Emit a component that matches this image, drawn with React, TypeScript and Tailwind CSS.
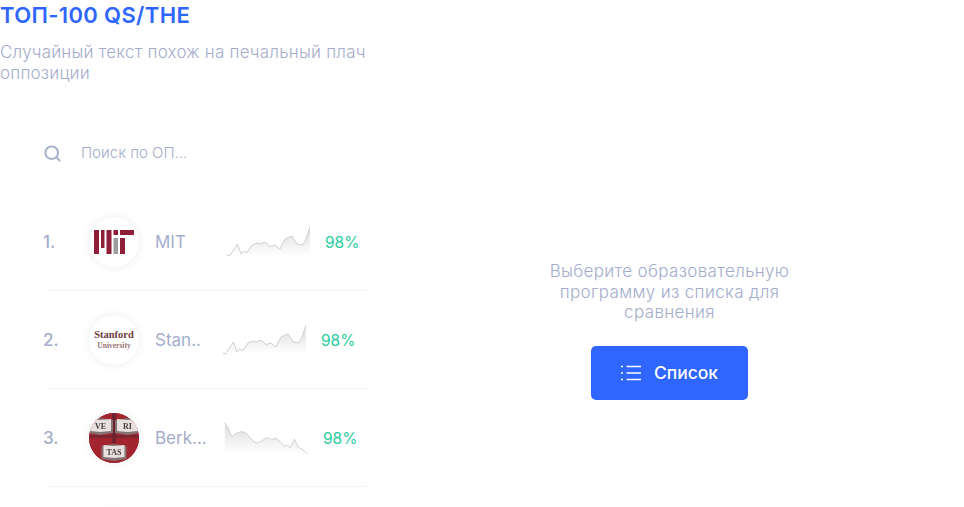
import React from 'react';
import { Search } from 'lucide-react';

const FONT = "font-['Inter','Noto_Sans',sans-serif]";

const UP_LINE = 'M1 30 L3.5 31 L11.5 19 L15 29 L17.500 26 L21 27.500 L26 20 L31 18 L34 19 L39 17 L44 21.500 L49 20 L54 24 L59 14 L66 11 L71 19 L77 20 L80 14 L84 2';
const UP_AREA = `${UP_LINE} L84 31 L1 31 Z`;

const DOWN_LINE = 'M1 2 L5 8 L10 19 L16 15 L21 13 L27 14 L33 20 L39 26 L43 27 L48 24 L55 20 L60 23 L66 21 L71 25 L76 31 L80 29 L84 33 L89 22 L94 32 L98 34 L106 40';
const DOWN_AREA = `${DOWN_LINE} L106 40 L1 40 Z`;

const Sparkline = ({ id, flip }: { id: string; flip?: boolean }) => (
  <svg width="84" height="33" viewBox="0 0 84 33" className="shrink-0">
    <defs>
      <linearGradient id={id} x1="0" y1="0" x2="0" y2="1">
        <stop offset="0" stopColor="#dcdcdc" />
        <stop offset="1" stopColor="#ffffff" />
      </linearGradient>
    </defs>
    {flip ? (
      <g transform="scale(0.79 0.82)">
        <path d={DOWN_AREA} fill={`url(#${id})`} />
        <path d={DOWN_LINE} fill="none" stroke="#cfcfcf" strokeWidth="1.2" />
      </g>
    ) : (
      <g>
        <path d={UP_AREA} fill={`url(#${id})`} />
        <path d={UP_LINE} fill="none" stroke="#cfcfcf" strokeWidth="1" />
      </g>
    )}
  </svg>
);

const MitLogo = () => (
  <svg width="40" height="40" viewBox="0 0 40 40" className="blur-[0.4px]">
    <g fill="#8f1f38">
      <rect x="0" y="8" width="5" height="24" />
      <rect x="7" y="8" width="3.500" height="18" />
      <rect x="12.500" y="8" width="5" height="24" />
      <rect x="19.500" y="8" width="4.500" height="5" />
      <rect x="26" y="8" width="14" height="5" />
      <rect x="26" y="16" width="5" height="16" />
    </g>
    <rect x="19.500" y="16" width="4.500" height="16" fill="#9d9d9d" />
  </svg>
);

const StanfordLogo = () => (
  <div className="flex flex-col items-center font-['Liberation_Serif',serif] leading-none text-[#6e3a40]">
    <span className="text-[10.500px] font-bold">Stanford</span>
    <span className="mt-[1px] text-[7.500px] font-bold text-[#9a7478]">University</span>
  </div>
);

const Book = ({ x, y, label }: { x: number; y: number; label: string }) => (
  <g transform={`translate(${x} ${y})`}>
    <path d="M-2 2 L10.500 0 L23 2 L23 15 L10.500 17 L-2 15 Z" fill="#857272" />
    <path d="M0 1 L10.500 2 L21 1 L21 13 L10.500 14 L0 13 Z" fill="#e6e0de" />
    <text x="10.500" y="11" textAnchor="middle" fontSize="8" fontFamily="Liberation Serif, serif" fontWeight="700" fill="#4a3a3c">{label}</text>
  </g>
);

const HarvardLogo = () => (
  <svg width="50" height="50" viewBox="0 0 50 50" className="blur-[0.4px]">
    <rect width="50" height="50" fill="#a2242f" />
    <rect x="0" y="22" width="50" height="3" fill="#7e2532" />
    <rect x="23" y="0" width="4" height="30" fill="#6e2230" />
    <Book x={1} y={5} label="VE" />
    <Book x={28} y={5} label="RI" />
    <Book x={14.500} y={31} label="TAS" />
  </svg>
);

const rows = [
  { n: '1.', name: 'MIT', logo: <MitLogo />, bg: 'bg-white', nameW: 'w-[71px]', flip: false },
  { n: '2.', name: 'Stan..', logo: <StanfordLogo />, bg: 'bg-white', nameW: 'w-[67px]', flip: false },
  { n: '3.', name: 'Berk...', logo: <HarvardLogo />, bg: 'bg-[#a2242f]', nameW: 'w-[69px]', flip: true },
];

const App: React.FC = () => {
  return (
    <div className={`${FONT} h-[507px] w-[964px] overflow-hidden bg-white`}>
      <div className="flex">
        <div className="w-[367px] shrink-0">
          <h1 className="text-[22px] font-semibold leading-[30px] tracking-[0.35px] text-[#2f66ff]">ТОП-100 QS/THE</h1>
          <p className="mt-[12px] text-[17px] font-light leading-[21px] tracking-[0.22px] text-[#a4adcb]">
            Случайный текст похож на печальный плач оппозиции
          </p>
          <div className="mt-[47px] flex h-[44px] items-center pl-[43px]">
            <Search size={19} strokeWidth={2.4} className="text-[#a4adcb]" />
            <span className="ml-[19px] text-[15px] font-light text-[#a4adcb]">Поиск по ОП...</span>
          </div>
          <div className="mt-[18px]">
            {rows.map(r => (
              <div key={r.n} className="ml-[48px] flex h-[98px] items-center border-b border-[#f3f4f8]">
                <span className="-ml-[5px] w-[46px] pt-[2px] text-[17px] font-medium text-[#a4adcb]">{r.n}</span>
                <div className={`flex h-[50px] w-[50px] shrink-0 items-center justify-center overflow-hidden rounded-full ${r.bg} shadow-[0_0_8px_rgba(40,50,90,0.09)]`}>
                  {r.logo}
                </div>
                <span className={`ml-[16px] ${r.nameW} shrink-0 pt-[2px] text-[17px] font-normal text-[#a4adcb]`}>{r.name}</span>
                <Sparkline id={`spark-${r.n[0]}`} flip={r.flip} />
                <span className="ml-[15px] pt-[2px] text-[15.500px] font-normal text-[#2bcb9f]">98%</span>
              </div>
            ))}
            {/* следующая строка списка обрезана низом окна */}
            <div className="ml-[88px] mt-[24px] h-[50px] w-[50px] rounded-full bg-white shadow-[0_0_8px_rgba(40,50,90,0.09)]" />
          </div>
        </div>
        <div className="flex flex-1 flex-col items-center pl-[8px] pt-[261px]">
          <p className="w-[270px] text-center text-[17px] font-light leading-[20.500px] tracking-[0.35px] text-[#a4adcb]">
            Выберите образовательную программу из списка для сравнения
          </p>
          <button className="mt-[23.500px] flex h-[54px] w-[157px] items-center justify-center gap-[13px] rounded-[5px] bg-[#2f66ff] text-[17.500px] font-medium text-white">
            <svg width="20" height="16" viewBox="0 0 20 16" fill="none" stroke="#fff" strokeWidth="1.500">
              <path d="M5.500 1.500H20M5.500 8H20M5.500 14.500H20" />
              <path d="M0 1.500H2M0 8H2M0 14.500H2" />
            </svg>
            Список
          </button>
        </div>
      </div>
    </div>
  );
};

export default App;
